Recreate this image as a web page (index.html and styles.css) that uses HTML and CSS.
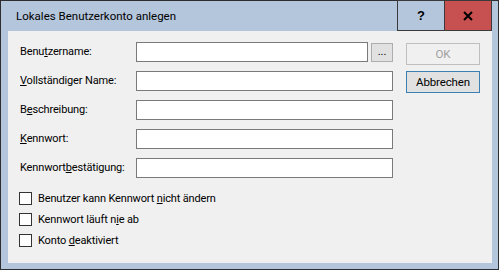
FILE: index.html
```html
<!DOCTYPE html>
<html lang="de">
<head>
    <meta charset="UTF-8">
    <title>Lokales Benutzerkonto anlegen</title>
    <link rel="stylesheet" href="styles.css">
</head>
<body>
    <div class="window">
        <div class="titlebar">
            <span class="title">Lokales Benutzerkonto anlegen</span>
            <div class="caption-btns">
                <div class="cap help">?</div>
                <div class="cap close">
                    <svg width="10" height="10" viewBox="0 0 10 10"><path d="M1 1 L9 9 M9 1 L1 9" stroke="#000" stroke-width="2"/></svg>
                </div>
            </div>
        </div>

        <div class="client">
            <div class="form">
                <div class="fields">
                    <label>Benu<u>t</u>zername:</label>
                    <div class="with-browse">
                        <input type="text" class="field short">
                        <button class="browse">...</button>
                    </div>

                    <label><u>V</u>ollständiger Name:</label>
                    <input type="text" class="field">

                    <label>B<u>e</u>schreibung:</label>
                    <input type="text" class="field">

                    <label><u>K</u>ennwort:</label>
                    <input type="password" class="field">

                    <label>Kennwort<u>b</u>estätigung:</label>
                    <input type="password" class="field">
                </div>

                <div class="checks">
                    <label class="check"><span class="box"></span><span>Benutzer kann Kennwort <u>n</u>icht ändern</span></label>
                    <label class="check"><span class="box"></span><span>Kennwort läuft n<u>i</u>e ab</span></label>
                    <label class="check"><span class="box"></span><span>Konto <u>d</u>eaktiviert</span></label>
                </div>
            </div>

            <div class="actions">
                <button class="btn disabled">OK</button>
                <button class="btn default">Abbrechen</button>
            </div>
        </div>
    </div>
</body>
</html>
```

FILE: styles.css
```css
*{
    margin: 0;
    padding: 0;
    box-sizing: border-box;
    font-family: 'Roboto', 'Liberation Sans', sans-serif;
}

body{
    background-color: #fff;
}

.window{
    width: 499px;
    height: 270px;
    background-color: #b4c6dc;
    border: 1px solid #2e2e2e;
    display: flex;
    flex-direction: column;
}

.titlebar{
    height: 30px;
    display: flex;
    align-items: flex-start;
    justify-content: space-between;
}

.title{
    font-size: 11.5px;
    color: #000;
    margin-left: 15px;
    margin-top: 8px;
}

.caption-btns{
    display: flex;
    margin-right: 6px;
    margin-top: -1px;
}

.cap{
    height: 31px;
    display: flex;
    align-items: center;
    justify-content: center;
    border: 1px solid #3a3a3a;
}

.help{
    width: 48px;
    font-size: 13px;
    font-weight: 700;
    font-family: 'Liberation Sans', sans-serif;
}

.close{
    width: 47px;
    background-color: #c75050;
    border-left: 0;
}

.client{
    flex: 1;
    margin: 0 6px 6px 7px;
    background-color: #f0f0f0;
    display: flex;
    padding: 11px 10px 0 12px;
    font-size: 11px;
    letter-spacing: -0.15px;
    color: #000;
}

.form{
    width: 373px;
}

.fields{
    display: grid;
    grid-template-columns: 116px 1fr;
    row-gap: 9px;
    align-items: center;
}

.fields label{
    line-height: 20px;
}

.field{
    height: 20px;
    width: 100%;
    border: 1px solid #7a7a7a;
    background: #fff;
    outline: 0;
}

.with-browse{
    display: flex;
    align-items: center;
}

.field.short{
    width: 232px;
}

.browse{
    width: 22px;
    height: 19px;
    margin-left: 3px;
    border: 1px solid #adadad;
    background-color: #e1e1e1;
    font-size: 11px;
    line-height: 14px;
    color: #000;
}

.checks{
    margin-top: 14px;
    margin-left: -1px;
    display: flex;
    flex-direction: column;
    gap: 8px;
}

.check{
    display: flex;
    align-items: center;
    height: 13px;
}

.box{
    width: 13px;
    height: 13px;
    border: 1px solid #333;
    background: #fff;
    margin-right: 6px;
}

.actions{
    margin-left: 13px;
    display: flex;
    flex-direction: column;
    gap: 6px;
    padding-top: 1px;
}

.btn{
    width: 74px;
    height: 22px;
    font-size: 11.5px;
    letter-spacing: -0.15px;
    border: 1px solid #adadad;
    background-color: #e1e1e1;
    color: #000;
}

.btn.disabled{
    border-color: #bfbfbf;
    background-color: #f0f0f0;
    color: #a0a0a0;
}

.btn.default{
    border-color: #3c7fb1;
}
```
